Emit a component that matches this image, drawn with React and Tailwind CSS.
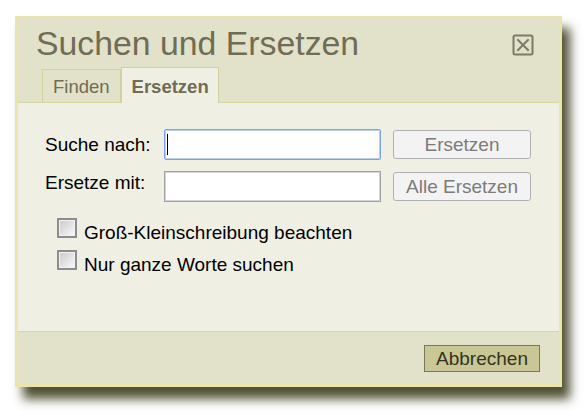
import React from 'react';

const font = "font-['Liberation_Sans',Arial,sans-serif]";

const CloseBox = () => (
  <svg width="22" height="22" viewBox="0 0 22 22" className="block">
    <rect x="1.5" y="1.5" width="19" height="19" rx="1.5" fill="none" stroke="#7d7b66" strokeWidth="2" />
    <path d="M6 6 L16 16 M16 6 L6 16" stroke="#7d7b66" strokeWidth="2" strokeLinecap="square" />
  </svg>
);

const Checkbox = ({ label }) => (
  <div className="flex items-start">
    <div className="w-[20px] h-[20px] border-2 border-[#8c8c8c] bg-linear-to-br from-[#c9c9c9] to-[#fafafa] shadow-[inset_0_0_0_1px_#f2f2f2]" />
    <span className="ml-[7px] mt-[4px] leading-[22px] text-[19px] text-black">{label}</span>
  </div>
);

const GrayButton = ({ children }) => (
  <button className="h-[29px] w-full rounded-[3px] border border-[#b0b0b0] bg-[#f3f3f3] text-[19px] leading-none text-[#7b7b7b]">
    {children}
  </button>
);

export default function App() {
  return (
    <div className={`w-[587px] h-[420px] bg-white pt-[16px] pl-[15px] ${font}`}>
      <div className="w-[547px] h-[371px] border-l-[3px] border-r-[3px] border-t-2 border-b-[3px] border-[#e8e6ab] shadow-[8px_12px_10px_rgba(50,50,20,0.85)] flex flex-col">
        {/* Header */}
        <div className="h-[85px] bg-[#e2e1c9] border-b border-[#d8d6a2] flex flex-col">
          <div className="flex items-start justify-between pt-[6px] pl-[18px] pr-[25px]">
            <h1 className="text-[33.8px] leading-[38px] text-[#6f6d55]">Suchen und Ersetzen</h1>
            <div className="mt-[10px]">
              <CloseBox />
            </div>
          </div>
          <div className="mt-auto flex items-end pl-[24px]">
            <div className="h-[33px] flex items-center pt-[2px] px-[10px] border-t border-l border-r border-[#d3d1a0] bg-[#e2e1c9] text-[18.5px] leading-[22px] text-[#6f6d55]">
              Finden
            </div>
            <div className="h-[36px] -mb-px flex items-center pt-[2px] pl-[10px] pr-[9px] border-t border-l border-r border-[#d3d1a0] bg-[#f0efe3] text-[18.5px] leading-[22px] font-bold text-[#6f6d55]">
              Ersetzen
            </div>
          </div>
        </div>

        {/* Body */}
        <div className="h-[228px] bg-[#f0efe3] pt-[26px] pl-[27px]">
          <div className="grid grid-cols-[107px_217px_138px] gap-x-[12px] gap-y-[11px] items-center">
            <span className="text-[19px] leading-[22px] text-black">Suche nach:</span>
            <div className="h-[31px] rounded-[2px] border border-[#7da2de] bg-white shadow-[inset_0_0_0_1px_#b9cff2] flex items-center pl-[2px]">
              <div className="w-px h-[21px] bg-black" />
            </div>
            <GrayButton>Ersetzen</GrayButton>

            <span className="text-[19px] leading-[22px] text-black mb-[8px]">Ersetze mit:</span>
            <div className="h-[31px] border border-[#a2a2a2] bg-white shadow-[inset_0_0_0_1px_#d4d4d4]" />
            <GrayButton>Alle Ersetzen</GrayButton>
          </div>

          <div className="mt-[16px] pl-[12px] flex flex-col gap-[6px]">
            <Checkbox label="Groß-Kleinschreibung beachten" />
            <Checkbox label="Nur ganze Worte suchen" />
          </div>
        </div>

        {/* Footer */}
        <div className="flex-1 bg-[#e2e1c9] border-t border-[#d8d6a2] flex justify-end items-start pt-[13px] pr-[19px]">
          <button className="w-[116px] h-[27px] border border-[#77775a] bg-[#c8c795] text-[19px] leading-none text-[#33331f]">
            Abbrechen
          </button>
        </div>
      </div>
    </div>
  );
}
